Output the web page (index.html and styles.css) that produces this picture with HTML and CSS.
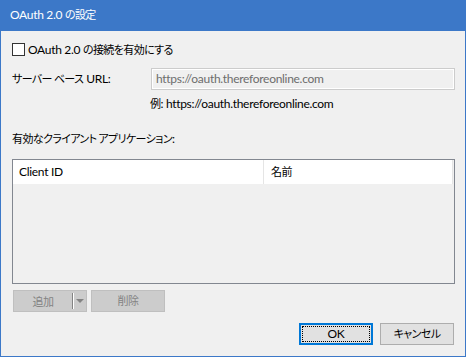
FILE: index.html
```html
<!DOCTYPE html>
<html lang="ja">
<head>
<meta charset="utf-8">
<title>OAuth 2.0 の設定</title>
<link rel="stylesheet" href="styles.css">
</head>
<body>
<div class="window">
  <div class="titlebar">OAuth 2.0 <span class="ja">の設定</span></div>
  <div class="content">
    <label class="check-row"><span class="checkbox"></span><span class="check-text">OAuth 2.0 <span class="ja">の接続を有効にする</span></span></label>
    <div class="url-row">
      <span class="url-label"><span class="ja">サーバー ベース</span> URL:</span>
      <div class="input">https://oauth.thereforeonline.com</div>
    </div>
    <div class="example"><span class="ja">例</span>: https://oauth.thereforeonline.com</div>
    <div class="section-label"><span class="ja">有効なクライアント アプリケーション</span>:</div>
    <div class="list">
      <div class="list-head">
        <div class="col col-id">Client ID</div>
        <div class="col col-name"><span class="ja">名前</span></div>
      </div>
    </div>
    <div class="list-buttons">
      <div class="btn disabled split"><span class="split-main ja">追加</span><span class="split-sep"></span><span class="split-arrow"></span></div>
      <div class="btn disabled"><span class="ja">削除</span></div>
    </div>
    <div class="dialog-buttons">
      <div class="btn default">OK</div>
      <div class="btn"><span class="ja">キャンセル</span></div>
    </div>
  </div>
</div>
</body>
</html>
```
FILE: styles.css
```css
html, body {
  margin: 0;
  padding: 0;
}
body {
  font-family: "Lato", "Noto Sans CJK JP", sans-serif;
  font-size: 12px;
  letter-spacing: -0.3px;
  color: #000;
  background: #f0f0f0;
}
.ja {
  font-family: "Noto Sans CJK JP", sans-serif;
  font-size: 11px;
  letter-spacing: -0.6px;
  font-feature-settings: "palt";
  line-height: 1;
}
.window {
  width: 466px;
  height: 357px;
  box-sizing: border-box;
  background: #3c78c8;
  padding: 0 1px 1px 1px;
  display: flex;
  flex-direction: column;
}
.titlebar {
  height: 31px;
  line-height: 30px;
  color: #fff;
  padding-left: 9px;
  flex: none;
  overflow: hidden;
}
.content {
  flex: 1;
  background: #f0f0f0;
  padding: 0 10px 0 11px;
  display: flex;
  flex-direction: column;
}
.check-row {
  margin-top: 11px;
  height: 15px;
  line-height: 15px;
  display: flex;
  align-items: center;
  gap: 3px;
}
.checkbox {
  width: 13px;
  height: 13px;
  box-sizing: border-box;
  border: 1px solid #333;
  background: #fff;
  flex: none;
}
.url-row {
  margin-top: 11px;
  height: 22px;
  display: flex;
  align-items: center;
}
.url-label {
  width: 139px;
  flex: none;
  color: #000;
  line-height: 16px;
}
.input {
  flex: 1;
  height: 22px;
  box-sizing: border-box;
  border: 1px solid #cccccc;
  box-shadow: inset 0 0 0 1px #fff;
  background: #f0f0f0;
  color: #6d6d6d;
  line-height: 20px;
  padding-left: 4px;
}
.example {
  margin-top: 6px;
  margin-left: 138px;
  height: 16px;
  line-height: 16px;
}
.section-label {
  margin-top: 19px;
  height: 16px;
  line-height: 16px;
}
.list {
  margin-top: 12px;
  height: 125px;
  flex: none;
  box-sizing: border-box;
  border: 1px solid #828790;
  background: #f0f0f0;
  padding: 0 1px 0 0;
}
.list-head {
  display: flex;
  height: 24px;
  background: #fff;
}
.col {
  line-height: 24px;
  height: 24px;
  box-sizing: border-box;
  border-right: 1px solid #e5e5e5;
}
.col-id {
  width: 251px;
  padding-left: 6px;
}
.col-name {
  flex: 1;
  padding-left: 7px;
}
.list-buttons {
  margin-top: 6px;
  margin-left: 1px;
  display: flex;
  gap: 4px;
}
.btn {
  width: 74px;
  height: 22px;
  box-sizing: border-box;
  border: 1px solid #adadad;
  background: #e1e1e1;
  line-height: 20px;
  text-align: center;
  position: relative;
}
.btn.disabled {
  background: #cccccc;
  border-color: #bfbfbf;
  color: #838383;
}
.split {
  display: flex;
  align-items: stretch;
}
.split-main {
  flex: 1;
  text-align: center;
  line-height: 20px;
}
.split-sep {
  width: 1px;
  margin: 2px 0;
  background: #838383;
  box-shadow: 1px 0 0 #fff;
}
.split-arrow {
  width: 13px;
  position: relative;
}
.split-arrow::after {
  content: "";
  position: absolute;
  left: 3px;
  top: 8px;
  border-left: 4px solid transparent;
  border-right: 4px solid transparent;
  border-top: 4px solid #838383;
}
.dialog-buttons {
  margin-top: 11px;
  margin-right: 1px;
  display: flex;
  justify-content: flex-end;
  gap: 7px;
}
.btn.default {
  border: 2px solid #0078d7;
  line-height: 18px;
}
.btn.default::after {
  content: "";
  position: absolute;
  inset: 1px;
  border: 1px dotted #000;
}
```
